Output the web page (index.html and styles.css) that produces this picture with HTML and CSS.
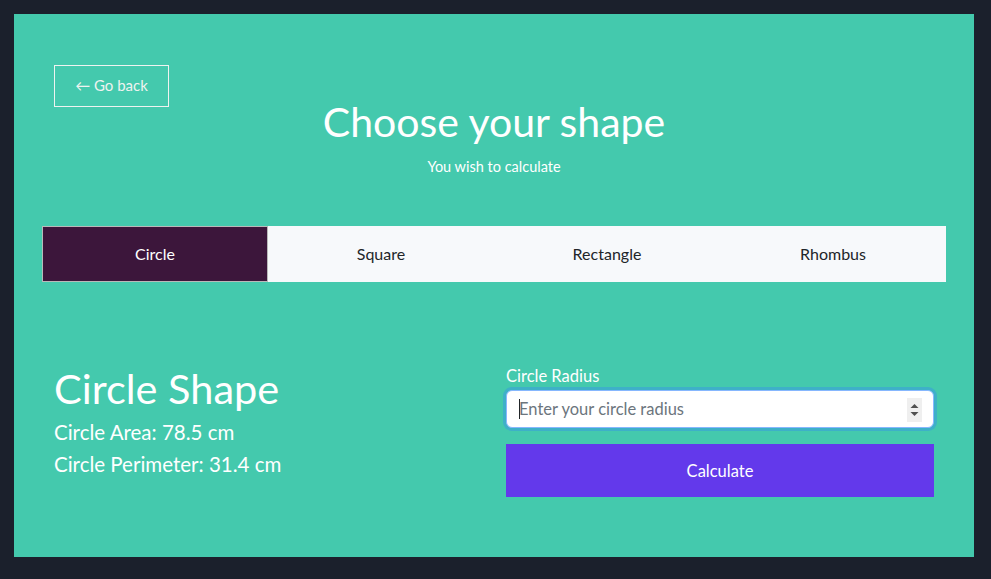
FILE: index.html
```html
<!DOCTYPE html>
<html lang="en">
<head>
<meta charset="utf-8">
<title>Choose your shape</title>
<link rel="stylesheet" href="styles.css">
</head>
<body>
<main class="panel">
  <header class="top">
    <button class="back">&larr; Go back</button>
    <h1 class="title">Choose your shape</h1>
    <p class="subtitle">You wish to calculate</p>
  </header>
  <nav class="tabs">
    <div class="tab active">Circle</div>
    <div class="tab">Square</div>
    <div class="tab">Rectangle</div>
    <div class="tab">Rhombus</div>
  </nav>
  <section class="content">
    <div class="result">
      <h2 class="shape-title">Circle Shape</h2>
      <p class="stat">Circle Area: 78.5 cm</p>
      <p class="stat">Circle Perimeter: 31.4 cm</p>
    </div>
    <form class="form">
      <label class="label" for="radius">Circle Radius</label>
      <div class="input-wrap">
        <input id="radius" class="input" type="text" placeholder="Enter your circle radius">
        <span class="caret"></span>
        <span class="spin"><svg width="9" height="14" viewBox="0 0 9 14"><path d="M4.5 1 L8.5 5 L0.5 5 Z" fill="#505050"/><path d="M4.5 13 L8.5 9 L0.5 9 Z" fill="#505050"/></svg></span>
      </div>
      <button type="button" class="calc">Calculate</button>
    </form>
  </section>
</main>
</body>
</html>
```
FILE: styles.css
```css
html, body { margin: 0; padding: 0; }
body {
  background: #1b202c;
  padding: 14px 17px 22px 14px;
  font-family: "Lato", "Open Sans", sans-serif;
  color: #fff;
}
.panel {
  background: #44c9ad;
  width: 960px;
  height: 543px;
  box-sizing: border-box;
  padding: 51px 28px 0 28px;
}
.top {
  position: relative;
  text-align: center;
}
.back {
  position: absolute;
  left: 12px;
  top: 0;
  width: 115px;
  height: 42px;
  background: transparent;
  border: 1px solid #eef3f0;
  color: #eef3f0;
  font-family: inherit;
  font-size: 15px;
  padding: 0 0 2px;
  cursor: pointer;
}
.title {
  margin: 0;
  padding-top: 32px;
  font-size: 41px;
  font-weight: 400;
  line-height: 1.2;
}
.subtitle {
  margin: 11px 0 0;
  font-size: 14.5px;
  line-height: 20px;
}
.tabs {
  margin-top: 49px;
  display: grid;
  grid-template-columns: repeat(4, 1fr);
  height: 56px;
  background: #f7f9fb;
}
.tab {
  display: flex;
  align-items: center;
  justify-content: center;
  font-size: 16px;
  color: #212529;
  padding-bottom: 2px;
}
.tab.active {
  background: #3c163b;
  color: #fff;
  border: 1px solid #b9b9b9;
}
.content {
  margin-top: 84px;
  padding: 0 12px;
  display: grid;
  grid-template-columns: 1fr 1fr;
  column-gap: 24px;
}
.shape-title {
  margin: 0 0 6px;
  font-size: 41.5px;
  font-weight: 400;
  line-height: 44px;
}
.stat {
  margin: 0;
  font-size: 20.5px;
  line-height: 32px;
}
.form { display: flex; flex-direction: column; }
.label {
  font-size: 16.5px;
  line-height: 20px;
  margin-bottom: 4px;
}
.input-wrap {
  position: relative;
  height: 38px;
  border-radius: 6px;
  box-shadow: 0 0 0 3px #3eb0c8;
  background: #fff;
  border: 1px solid #86b7fe;
  box-sizing: border-box;
}
.input {
  width: 100%;
  height: 100%;
  box-sizing: border-box;
  border: 0;
  outline: none;
  background: transparent;
  padding: 0 12px;
  font-family: inherit;
  font-size: 16.5px;
  color: #212529;
}
.input::placeholder { color: #6c757d; }
.caret {
  position: absolute;
  left: 12px;
  top: 8px;
  width: 1px;
  height: 20px;
  background: #212529;
}
.spin {
  position: absolute;
  right: 11px;
  top: 7px;
  width: 15px;
  height: 24px;
  background: #efefef;
  display: flex;
  align-items: center;
  justify-content: center;
}
.calc {
  margin-top: 16px;
  height: 53px;
  background: #6339eb;
  border: 0;
  color: #fff;
  font-family: inherit;
  font-size: 16.5px;
}
```
